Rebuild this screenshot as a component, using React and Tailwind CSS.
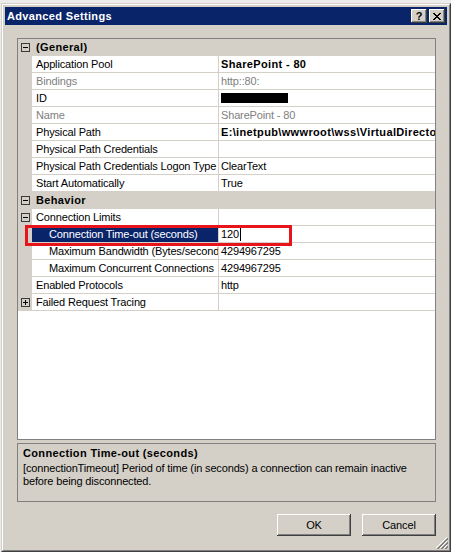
import React from "react";

const rows = [
  { cat: true, label: "(General)" },
  { label: "Application Pool", value: "SharePoint - 80", bold: true },
  { label: "Bindings", value: "http::80:", disabled: true },
  { label: "ID", redacted: true },
  { label: "Name", value: "SharePoint - 80", disabled: true },
  { label: "Physical Path", value: "E:\\inetpub\\wwwroot\\wss\\VirtualDirectories\\80", bold: true },
  { label: "Physical Path Credentials", value: "" },
  { label: "Physical Path Credentials Logon Type", value: "ClearText" },
  { label: "Start Automatically", value: "True" },
  { cat: true, label: "Behavior" },
  { label: "Connection Limits", value: "", expander: "minus" },
  { label: "Connection Time-out (seconds)", value: "120", indent: true, selected: true },
  { label: "Maximum Bandwidth (Bytes/second)", value: "4294967295", indent: true },
  { label: "Maximum Concurrent Connections", value: "4294967295", indent: true },
  { label: "Enabled Protocols", value: "http" },
  { label: "Failed Request Tracing", value: "", expander: "plus" },
];

function Expander({ kind }) {
  return (
    <div className="relative w-[9px] h-[9px] border border-[#3a3a3a]">
      <div className="absolute left-[1px] top-[3px] w-[5px] h-[1px] bg-black" />
      {kind === "plus" && <div className="absolute left-[3px] top-[1px] w-[1px] h-[5px] bg-black" />}
    </div>
  );
}

function Row({ r }) {
  if (r.cat) {
    return (
      <div className="flex h-[17px] bg-[#d4d0c8] shrink-0">
        <div className="w-[14px] flex items-center pl-[3px]">
          <Expander kind="minus" />
        </div>
        <div className="pl-[4px] font-bold tracking-[0.35px] leading-[17px] whitespace-nowrap">{r.label}</div>
      </div>
    );
  }
  const labelCls = r.selected
    ? "bg-[#0a246a] text-white"
    : r.disabled
    ? "text-[#808080]"
    : "text-black";
  return (
    <div className="flex h-[17px] shrink-0">
      <div className="w-[14px] bg-[#d4d0c8] flex items-center pl-[3px]">
        {r.expander && <Expander kind={r.expander} />}
      </div>
      <div className="w-[187px] h-full border-r border-b border-[#d4d0c8] overflow-hidden">
        <div
          className={`h-[16px] leading-[16px] whitespace-nowrap tracking-[-0.15px] ${labelCls} ${
            r.indent ? "pl-[17px]" : "pl-[4px]"
          }`}
        >
          {r.label}
        </div>
      </div>
      <div
        className={`flex-1 h-full border-b border-[#d4d0c8] overflow-hidden whitespace-nowrap pl-[2px] leading-[16px] flex items-center ${
          r.disabled ? "text-[#808080]" : "text-black"
        } ${r.bold ? "font-bold tracking-[0.35px]" : "tracking-[-0.15px]"}`}
      >
        {r.redacted ? (
          <div className="w-[67px] h-[10px] bg-black" />
        ) : r.selected ? (
          <span className="flex items-center">
            {r.value}
            <span className="inline-block w-[1px] h-[13px] bg-black ml-[1px]" />
          </span>
        ) : (
          r.value
        )}
      </div>
    </div>
  );
}

function CaptionButton({ children }) {
  return (
    <div className="w-[16px] h-[14px] bg-[#d4d0c8] flex items-center justify-center shadow-[inset_-1px_-1px_#404040,inset_1px_1px_#ffffff,inset_-2px_-2px_#808080,inset_2px_2px_#d4d0c8]">
      {children}
    </div>
  );
}

function Button({ children }) {
  return (
    <div className="w-[74px] h-[22px] bg-[#d4d0c8] flex items-center justify-center shadow-[inset_-1px_-1px_#404040,inset_1px_1px_#ffffff,inset_-2px_-2px_#808080,inset_2px_2px_#d4d0c8] tracking-[-0.15px]">
      {children}
    </div>
  );
}

export default function App() {
  return (
    <div className="w-[451px] h-[552px] bg-[#ececec] pt-[3px] pl-[1px] overflow-hidden font-['Liberation_Sans',Arial,sans-serif] text-[11px] text-black">
      <div className="w-[450px] h-[549px] border border-t-[#d4d0c8] border-l-[#d4d0c8] border-r-[#404040] border-b-[#404040] bg-[#d4d0c8]">
        <div className="relative h-full border border-t-white border-l-white border-r-[#808080] border-b-[#808080] p-[2px] flex flex-col">
          {/* Title bar */}
          <div className="h-[18px] shrink-0 bg-[#0a246a] flex items-center pl-[2px] pr-[2px]">
            <div className="text-white font-bold tracking-[0.35px] leading-[18px]">Advanced Settings</div>
            <div className="ml-auto flex gap-[2px]">
              <CaptionButton>
                <span className="font-bold text-[11px] leading-[11px] text-black mt-[1px]">?</span>
              </CaptionButton>
              <CaptionButton>
                <svg width="8" height="7" viewBox="0 0 8 7" shapeRendering="crispEdges">
                  <path
                    d="M0 0h2v1h-2zM6 0h2v1h-2zM1 1h2v1h-2zM5 1h2v1h-2zM2 2h4v1h-4zM3 3h2v1h-2zM2 4h4v1h-4zM1 5h2v1h-2zM5 5h2v1h-2zM0 6h2v1h-2zM6 6h2v1h-2z"
                    fill="#000"
                  />
                </svg>
              </CaptionButton>
            </div>
          </div>

          {/* Body */}
          <div className="flex-1 flex flex-col pl-[12px] pr-[11px] pt-[13px] pb-[12px]">
            <div className="relative h-[402px] shrink-0 border border-[#808080] bg-white flex flex-col">
              {rows.map((r, i) => (
                <Row key={i} r={r} />
              ))}
              <div className="absolute left-[7px] top-[186px] w-[267px] h-[21px] border-[3px] border-[#e8141c]" />
            </div>

            <div className="mt-[3px] h-[59px] shrink-0 border border-[#808080] pl-[5px] pt-[2px]">
              <div className="font-bold tracking-[0.35px] leading-[14px] mb-[2px]">Connection Time-out (seconds)</div>
              <div className="leading-[13px] tracking-[-0.15px]">
                [connectionTimeout] Period of time (in seconds) a connection can remain inactive
                <br />
                before being disconnected.
              </div>
            </div>

            <div className="mt-[12px] flex justify-end gap-[11px]">
              <Button>OK</Button>
              <Button>Cancel</Button>
            </div>
          </div>

          {/* Resize grip */}
          <svg
            className="absolute right-[1px] bottom-[1px]"
            width="12"
            height="12"
            viewBox="0 0 12 12"
            shapeRendering="crispEdges"
          >
            <path d="M11 0L0 11M11 4L4 11M11 8L8 11" stroke="#ffffff" strokeWidth="1" />
            <path d="M12 1L1 12M12 2L2 12M12 5L5 12M12 6L6 12M12 9L9 12M12 10L10 12" stroke="#808080" strokeWidth="1" />
          </svg>
        </div>
      </div>
    </div>
  );
}
